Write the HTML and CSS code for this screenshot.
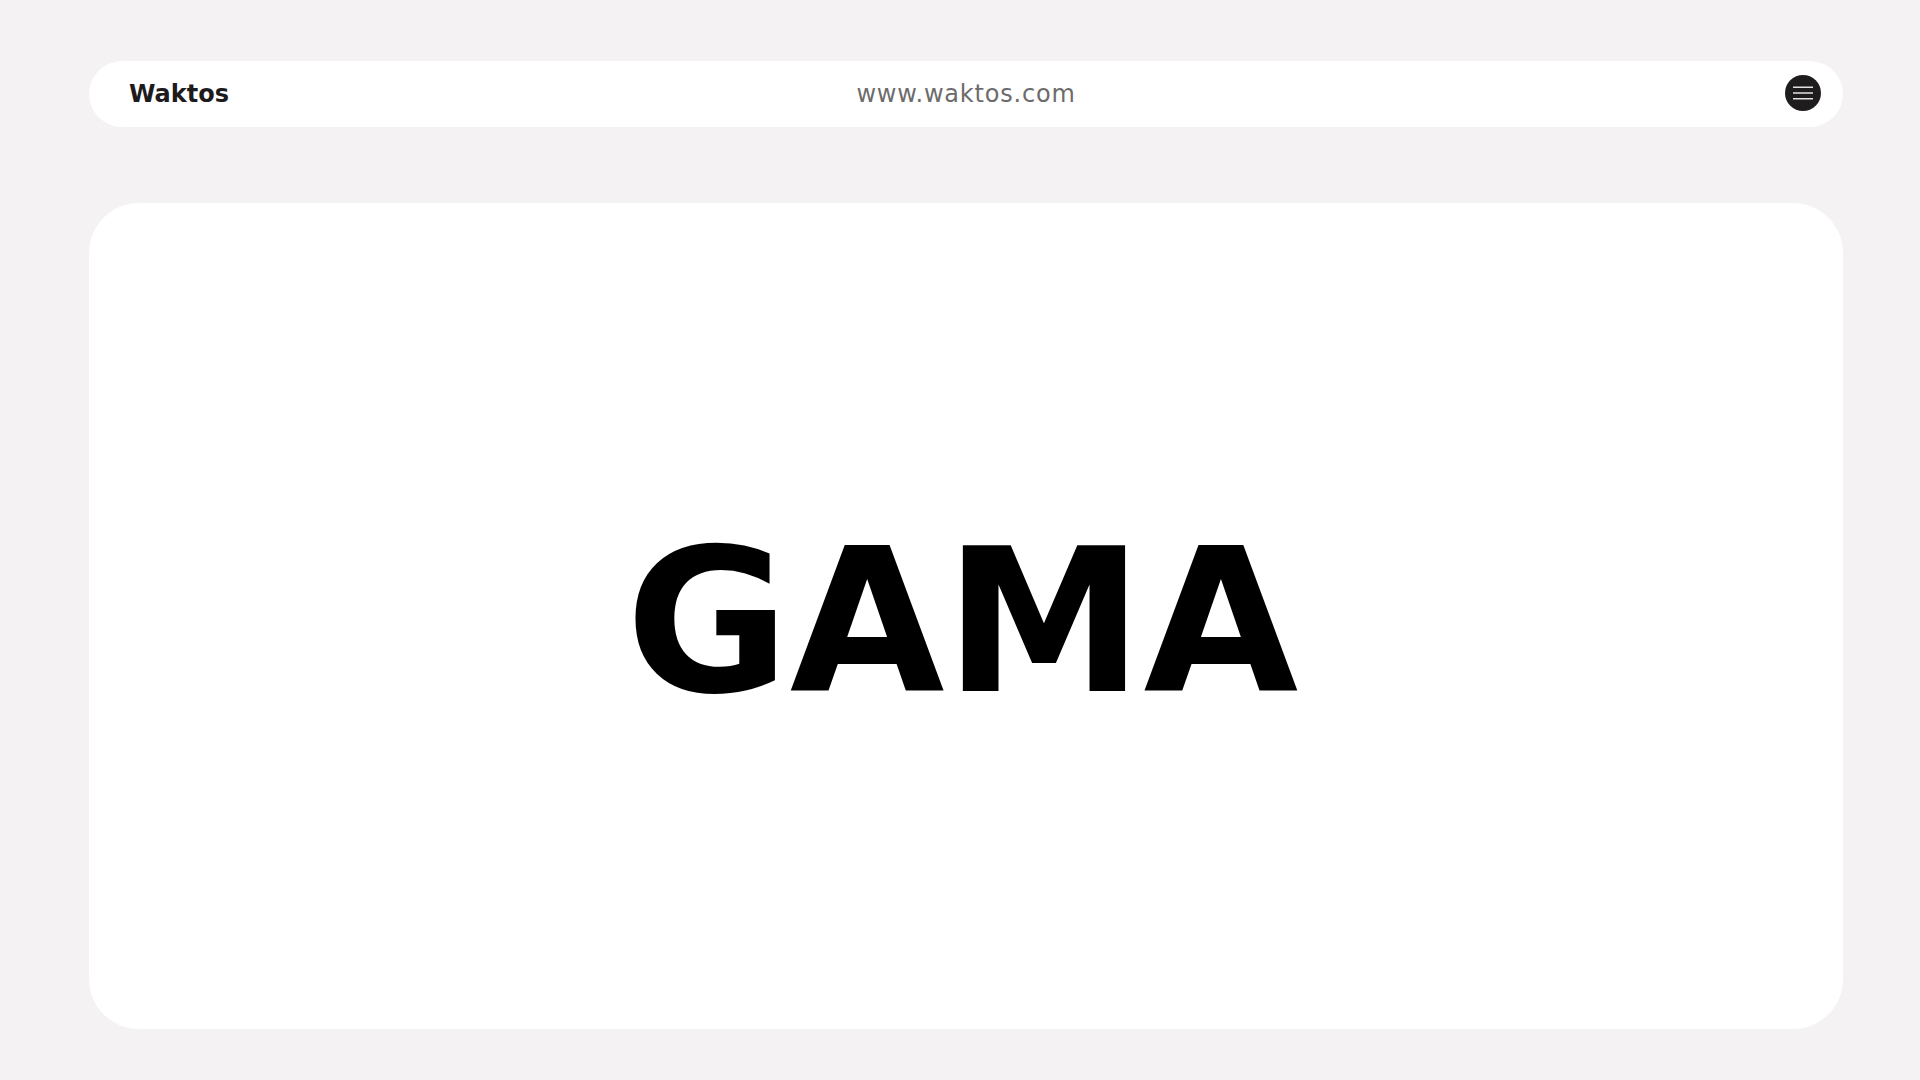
FILE: index.html
```html
<!DOCTYPE html>
<html lang="en">
<head>
<meta charset="utf-8">
<title>Waktos</title>
<link rel="stylesheet" href="styles.css">
</head>
<body>
<div class="page">
  <header class="topbar">
    <div class="brand">Waktos</div>
    <div class="url">www.waktos.com</div>
    <button class="menu" aria-label="Menu">
      <svg width="20" height="14" viewBox="0 0 20 14" aria-hidden="true">
        <path d="M0 1.3H20M0 7H20M0 12.7H20" stroke="#e2e0e1" stroke-width="1.5" fill="none"/>
      </svg>
    </button>
  </header>
  <main class="card">
    <h1 class="title">GAMA</h1>
  </main>
</div>
</body>
</html>
```
FILE: styles.css
```css
html, body {
  margin: 0;
  padding: 0;
  background: #f4f2f3;
  width: 1920px;
  height: 1080px;
  overflow: hidden;
}

.page {
  width: 1754px;
  margin-left: 89px;
  padding-top: 61px;
  display: flex;
  flex-direction: column;
  gap: 76px;
}

.topbar {
  height: 66px;
  background: #ffffff;
  border-radius: 33px;
  display: grid;
  grid-template-columns: 1fr auto 1fr;
  align-items: center;
  padding: 0 22px;
}

.brand {
  font-family: "DejaVu Sans", sans-serif;
  font-weight: 700;
  font-size: 24px;
  color: #1d1b1c;
  justify-self: start;
  margin-left: 18px;
  margin-top: 0;
}

.url {
  font-family: "DejaVu Sans", sans-serif;
  font-size: 24px;
  letter-spacing: 0.8px;
  color: #6d6b6c;
  margin-top: 0;
}

.menu {
  justify-self: end;
  width: 36px;
  height: 36px;
  border-radius: 50%;
  background: #1f1c1d;
  border: none;
  padding: 0;
  display: flex;
  align-items: center;
  justify-content: center;
  margin-top: -3px;
}

.card {
  height: 826px;
  background: #ffffff;
  border-radius: 50px;
  display: flex;
  align-items: center;
  justify-content: center;
}

.title {
  margin: 11px 8px 0 0;
  font-family: "DejaVu Sans", sans-serif;
  font-weight: 700;
  font-size: 200px;
  color: #000000;
  line-height: 1;
}
```
